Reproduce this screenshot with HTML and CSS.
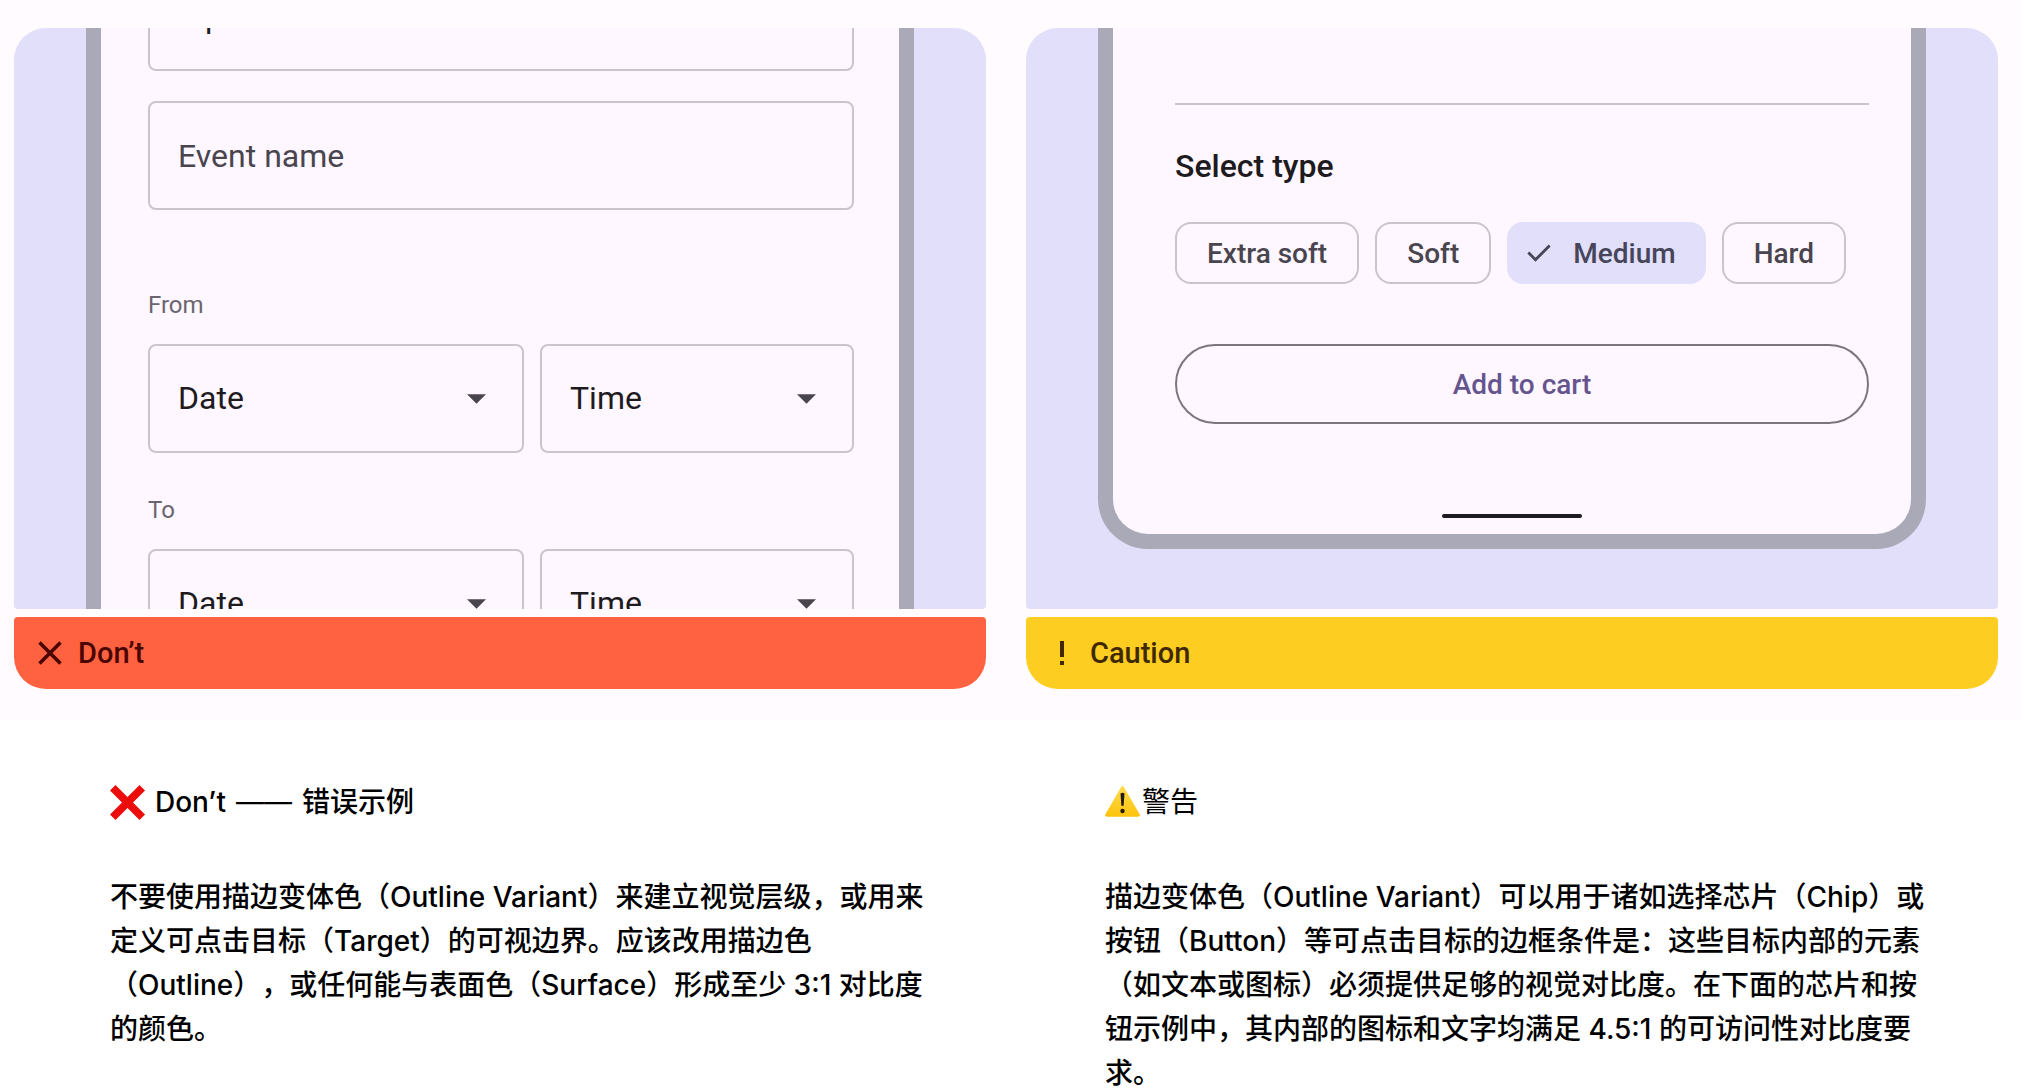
FILE: index.html
```html
<!DOCTYPE html>
<html lang="zh-CN">
<head>
<meta charset="utf-8">
<meta name="viewport" content="width=device-width, initial-scale=1">
<title>Outline Variant</title>
<link rel="stylesheet" href="styles.css">
</head>
<body>
<main>
  <section class="examples">
    <figure class="example">
      <div class="stage">
        <form class="phone phone-form">
          <input class="field" type="text" value="Tips" aria-label="Title">
          <input class="field" type="text" placeholder="Event name" aria-label="Event name">
          <fieldset class="range">
            <legend class="range-label">From</legend>
            <div class="range-row">
              <div class="picker">
                <select class="field" aria-label="From date"><option>Date</option></select>
                <svg class="caret" viewBox="0 0 20 10" aria-hidden="true"><path d="M0 0h20L10 10z"/></svg>
              </div>
              <div class="picker">
                <select class="field" aria-label="From time"><option>Time</option></select>
                <svg class="caret" viewBox="0 0 20 10" aria-hidden="true"><path d="M0 0h20L10 10z"/></svg>
              </div>
            </div>
          </fieldset>
          <fieldset class="range">
            <legend class="range-label">To</legend>
            <div class="range-row">
              <div class="picker">
                <select class="field" aria-label="To date"><option>Date</option></select>
                <svg class="caret" viewBox="0 0 20 10" aria-hidden="true"><path d="M0 0h20L10 10z"/></svg>
              </div>
              <div class="picker">
                <select class="field" aria-label="To time"><option>Time</option></select>
                <svg class="caret" viewBox="0 0 20 10" aria-hidden="true"><path d="M0 0h20L10 10z"/></svg>
              </div>
            </div>
          </fieldset>
        </form>
      </div>
      <figcaption class="verdict verdict-dont">
        <svg class="verdict-icon" viewBox="0 0 24 24" aria-hidden="true"><path d="M1.500 1.500l21 21M22.500 1.500l-21 21" fill="none" stroke="currentColor" stroke-width="3.600"/></svg>
        <span>Don’t</span>
      </figcaption>
    </figure>

    <figure class="example">
      <div class="stage">
        <div class="phone phone-product">
          <hr class="divider">
          <h2 class="product-title">Select type</h2>
          <div class="chips">
            <button class="chip" type="button">Extra soft</button>
            <button class="chip" type="button">Soft</button>
            <button class="chip chip-selected" type="button" aria-pressed="true">
              <svg class="chip-check" viewBox="0 0 24 18" aria-hidden="true"><path d="M1.300 8.500l7.200 7.200L22.700 1.500" fill="none" stroke="currentColor" stroke-width="2.800"/></svg>
              Medium
            </button>
            <button class="chip" type="button">Hard</button>
          </div>
          <button class="cart-button" type="button">Add to cart</button>
          <div class="home-bar"></div>
        </div>
      </div>
      <figcaption class="verdict verdict-caution">
        <svg class="verdict-icon" viewBox="0 0 24 24" aria-hidden="true"><path d="M10 0h4v16h-4zM10 20h4v4h-4z" fill="currentColor"/></svg>
        <span>Caution</span>
      </figcaption>
    </figure>
  </section>

  <section class="notes">
    <article class="note note-dont">
      <h3 class="note-title">
        <svg class="emoji" viewBox="0 0 35 35" aria-hidden="true"><path d="M5.500 0L17.500 12 29.500 0 35 5.500 23 17.500 35 29.500 29.500 35 17.500 23 5.500 35 0 29.500 12 17.500 0 5.500z" fill="#ec0c0c"/></svg>
        <span>Don’t</span> <span class="dash">——</span> <span>错误示例</span>
      </h3>
      <p class="note-text">不要使用描边变体色（Outline Variant）来建立视觉层级，或用来定义可点击目标（Target）的可视边界。应该改用描边色（Outline），或任何能与表面色（Surface）形成至少 3:1 对比度的颜色。</p>
    </article>
    <article class="note note-caution">
      <h3 class="note-title">
        <svg class="emoji" viewBox="0 0 35 35" aria-hidden="true">
          <defs><linearGradient id="sign" x1="0" y1="0" x2="0" y2="1"><stop offset="0" stop-color="#ffdc52"/><stop offset="1" stop-color="#fdc30a"/></linearGradient></defs>
          <path d="M15.800 2.500q1.700-2.800 3.400 0L34.500 29q1.200 2.600-1.700 2.800H2.200Q-.7 31.600.5 29z" fill="url(#sign)"/>
          <path d="M15.500 8.500q2-1.600 4 0l-.9 12.300h-2.200z" fill="#231a05"/>
          <circle cx="17.500" cy="26" r="2.200" fill="#231a05"/>
        </svg>
        <span>警告</span>
      </h3>
      <p class="note-text">描边变体色（Outline Variant）可以用于诸如选择芯片（Chip）或按钮（Button）等可点击目标的边框条件是：这些目标内部的元素（如文本或图标）必须提供足够的视觉对比度。在下面的芯片和按钮示例中，其内部的图标和文字均满足 4.5:1 的可访问性对比度要求。</p>
    </article>
  </section>
</main>
</body>
</html>
```

FILE: styles.css
```css
* {
  box-sizing: border-box;
}

body {
  margin: 0;
  background: #fff;
  color: #000;
  font-family: Roboto, "Noto Sans CJK SC", sans-serif;
}

.examples,
.notes {
  display: grid;
  grid-template-columns: 1fr 1fr;
  column-gap: 40px;
  padding: 0 24px 0 14px;
}

.examples {
  padding-top: 28px;
  padding-bottom: 31px;
  background: #fffbff;
}

.example {
  display: flex;
  flex-direction: column;
  gap: 8px;
  margin: 0;
  min-width: 0;
}

/* Artwork area: the device runs past its edges and is cropped */
.stage {
  height: 581px;
  padding: 0 72px;
  border-radius: 32px 32px 4px 4px;
  background: #e1dffa;
  overflow: hidden;
}

.phone {
  border: 15px solid #aaa9b8;
  border-radius: 50px;
  background: #fef7ff;
  color: #1d1b20;
}

.phone-form {
  display: flex;
  flex-direction: column;
  margin-top: -126px;
  padding: 45px 45px 45px 47px;
}

.field {
  display: block;
  width: 100%;
  height: 109px;
  padding: 0 28px;
  border: 2px solid #cac4cf;
  border-radius: 8px;
  background: transparent;
  color: inherit;
  font: 32px Roboto, sans-serif;
  appearance: none;
}

select.field {
  padding-bottom: 2px;
}

.field::placeholder {
  color: #49454f;
  opacity: 1;
}

.field + .field {
  margin-top: 30px;
}

.range {
  margin: 0;
  padding: 0;
  border: 0;
}

.field + .range {
  margin-top: 79px;
}

.range + .range {
  margin-top: 41px;
}

.range-label {
  padding: 0;
  color: #6a6570;
  font-size: 24px;
  line-height: 32px;
}

.range-row {
  display: grid;
  grid-template-columns: 376fr 314fr;
  gap: 16px;
  padding-top: 23px;
}

.picker {
  position: relative;
}

.caret {
  position: absolute;
  top: 50px;
  right: 38px;
  width: 19px;
  height: 10px;
  fill: #49454f;
  pointer-events: none;
}

.phone-product {
  display: flex;
  flex-direction: column;
  height: 521px;
  padding: 75px 42px 16px 62px;
  border-top: 0;
  border-radius: 0 0 50px 50px;
}

.divider {
  width: 100%;
  height: 2px;
  margin: 0;
  border: 0;
  background: #cac4cf;
}

.product-title {
  margin: 41px 0 0;
  font-size: 32px;
  font-weight: 500;
  line-height: 40px;
}

.chips {
  display: flex;
  gap: 16px;
  margin-top: 36px;
}

.chip {
  display: flex;
  align-items: center;
  gap: 22px;
  height: 62px;
  padding: 0 30px;
  border: 2px solid #cac4cf;
  border-radius: 16px;
  background: transparent;
  color: #49454f;
  font: 500 28px Roboto, sans-serif;
}

.chip-selected {
  padding: 0 28px 0 18px;
  border-color: #e1dffa;
  background: #e1dffa;
  color: #464559;
}

.chip-check {
  width: 24px;
  height: 18px;
}

.cart-button {
  height: 80px;
  margin-top: 60px;
  border: 2px solid #7b7580;
  border-radius: 40px;
  background: transparent;
  color: #65558f;
  font: 500 28px Roboto, sans-serif;
}

.home-bar {
  align-self: center;
  width: 140px;
  height: 4px;
  margin-top: auto;
  margin-right: 20px;
  border-radius: 2px;
  background: #1d1b20;
}

.verdict {
  display: flex;
  align-items: center;
  gap: 16px;
  height: 72px;
  padding: 0 24px;
  border-radius: 4px 4px 32px 32px;
  font-size: 29px;
  font-weight: 500;
}

.verdict-icon {
  width: 24px;
  height: 24px;
}

.verdict-dont {
  background: #ff6240;
  color: #4a0500;
}

.verdict-caution {
  background: #fdcd22;
  color: #402900;
}

.notes {
  padding-top: 60px;
  font-family: Inter, "Noto Sans CJK SC", sans-serif;
  font-size: 28px;
  font-weight: 500;
  line-height: 44px;
  text-spacing-trim: space-all;
}

.note-dont {
  padding: 0 56px 0 96px;
}

.note-caution {
  padding: 0 68px 0 79px;
}

.note-title {
  display: flex;
  align-items: center;
  gap: 10px;
  margin: 0 0 51px;
  font-size: 28px;
  font-weight: 500;
}

.note-caution .note-title {
  gap: 2px;
  font-weight: 400;
}

.dash {
  font-weight: 400;
}

.note-text {
  margin: 0;
}

.emoji {
  width: 35px;
  height: 35px;
}
```
